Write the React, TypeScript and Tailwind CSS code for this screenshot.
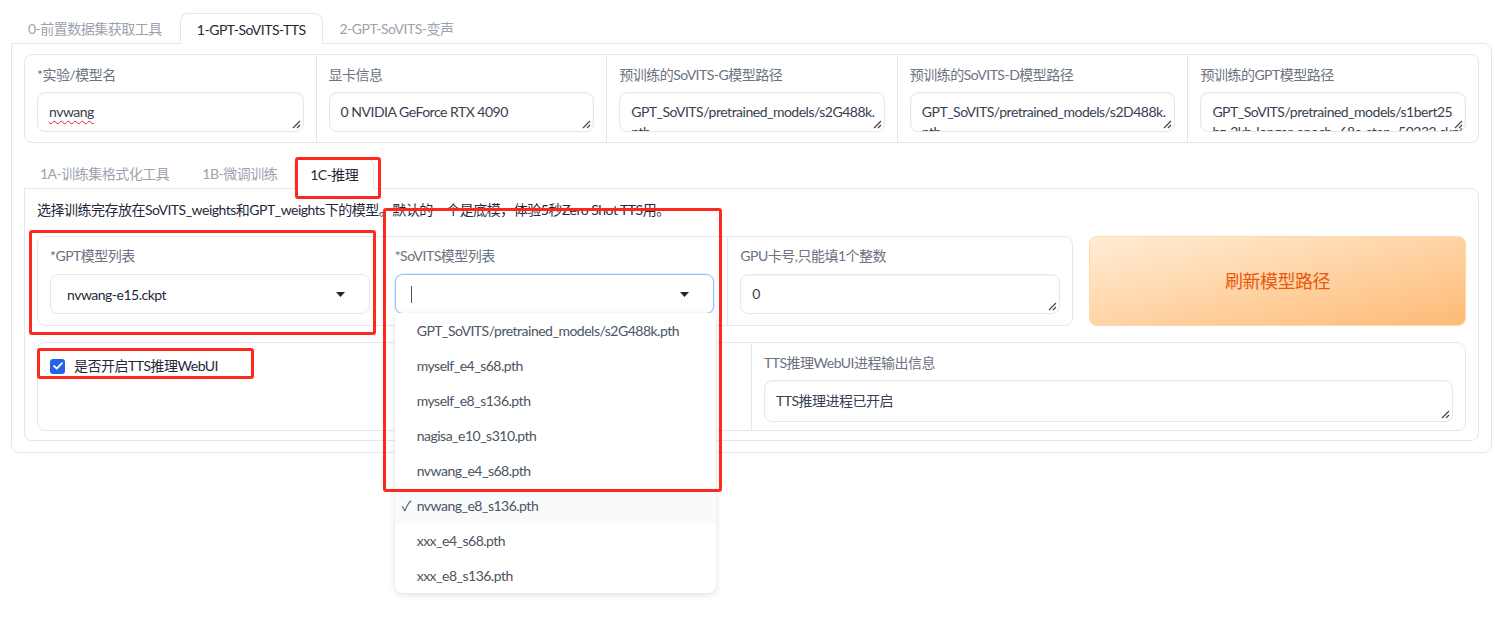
import React from "react";

function Resize() {
  return (
    <svg className="absolute right-[2px] bottom-[2px]" width="9" height="9" viewBox="0 0 9 9">
      <path d="M8 1 L1 8 M8 5 L5 8" stroke="#444" strokeWidth="1.2" fill="none" />
    </svg>
  );
}

function FakeArea({ lines, h = 40, extra = "" }: { lines: React.ReactNode[]; h?: number; extra?: string }) {
  return (
    <div
      className={`relative w-full overflow-hidden rounded-lg border border-[#e5e7eb] bg-white px-[11px] pt-[9px] text-[14px] leading-5 text-[#374151] shadow-[inset_0_1px_2px_rgba(0,0,0,0.05)] ${extra}`}
      style={{ height: h }}
    >
      {lines.map((l, i) => (
        <div key={i} className="whitespace-nowrap">
          {l}
        </div>
      ))}
      <Resize />
    </div>
  );
}

function Label({ children }: { children: React.ReactNode }) {
  return <div className="h-5 text-[14px] leading-5 text-[#6b7280] whitespace-nowrap">{children}</div>;
}

function Caret() {
  return (
    <svg width="9" height="5" viewBox="0 0 9 5">
      <path d="M0 0 L9 0 L4.5 5 Z" fill="#222" />
    </svg>
  );
}

const options = [
  "GPT_SoVITS/pretrained_models/s2G488k.pth",
  "myself_e4_s68.pth",
  "myself_e8_s136.pth",
  "nagisa_e10_s310.pth",
  "nvwang_e4_s68.pth",
  "nvwang_e8_s136.pth",
  "xxx_e4_s68.pth",
  "xxx_e8_s136.pth",
];

export default function App() {
  const topCols = [
    { label: "*实验/模型名", lines: [<span className="underline decoration-wavy decoration-[#e11d48] decoration-1 underline-offset-[3px]">nvwang</span>] },
    { label: "显卡信息", lines: ["0 NVIDIA GeForce RTX 4090"] },
    { label: "预训练的SoVITS-G模型路径", lines: ["GPT_SoVITS/pretrained_models/s2G488k.", "pth"] },
    { label: "预训练的SoVITS-D模型路径", lines: ["GPT_SoVITS/pretrained_models/s2D488k.", "pth"] },
    { label: "预训练的GPT模型路径", lines: ["GPT_SoVITS/pretrained_models/s1bert25", "hz-2kh-longer-epoch=68e-step=50232.ckpt"] },
  ];

  return (
    <div className="relative h-[642px] w-full overflow-hidden bg-white pl-[11px] pr-[15px] pt-[13px] font-['Lato','Noto_Sans_CJK_SC',sans-serif] text-[14px] tracking-[-0.5px] text-[#1f2937]">
      {/* outer tabs */}
      <div className="flex h-[30px] items-end">
        <div className="flex h-[30px] items-center pl-[17px] pr-[18px] text-[#9ca3af]">0-前置数据集获取工具</div>
        <div className="relative z-10 -mb-px flex h-[31px] items-center rounded-t-lg border border-b-0 border-[#e5e7eb] bg-white px-[16px] text-[#1f2937]">
          1-GPT-SoVITS-TTS
        </div>
        <div className="flex h-[30px] items-center px-[17px] text-[#9ca3af]">2-GPT-SoVITS-变声</div>
      </div>

      {/* outer panel */}
      <div className="rounded-b-lg rounded-tr-lg border border-[#e5e7eb] px-[12px] pt-[10px] pb-[11px]">
        {/* top row */}
        <div className="grid grid-cols-5 rounded-lg border border-[#e5e7eb]">
          {topCols.map((c, i) => (
            <div key={i} className={`px-[12px] pt-[10px] pb-[10px] ${i > 0 ? "border-l border-[#e5e7eb]" : ""}`}>
              <Label>{c.label}</Label>
              <div className="mt-[7px]">
                <FakeArea lines={c.lines} />
              </div>
            </div>
          ))}
        </div>

        {/* inner tabs */}
        <div className="mt-[14px] flex h-[31px] items-end">
          <div className="flex h-[30px] items-center px-[16px] text-[#9ca3af]">1A-训练集格式化工具</div>
          <div className="flex h-[30px] items-center px-[17px] text-[#9ca3af]">1B-微调训练</div>
          <div className="relative z-10 -mb-px flex h-[31px] items-center rounded-t-lg border border-b-0 border-[#e5e7eb] bg-white px-[15px] text-[#1f2937]">
            1C-推理
          </div>
        </div>

        {/* inner panel */}
        <div className="flex flex-col gap-4 rounded-b-lg rounded-tr-lg border border-[#e5e7eb] px-[12px] pt-[11px] pb-[9px]">
          <div className="h-5 leading-5 text-[#1f2937]">
            选择训练完存放在SoVITS_weights和GPT_weights下的模型。默认的一个是底模，体验5秒Zero Shot TTS用。
          </div>

          {/* row 2 */}
          <div className="flex h-[90px] gap-4">
            <div className="flex flex-1 rounded-lg border border-[#e5e7eb]">
              <div className="flex-1 px-[12px] pt-[9px]">
                <Label>*GPT模型列表</Label>
                <div className="mt-[8px] flex h-[40px] items-center justify-between rounded-lg border border-[#e5e7eb] bg-white pl-[16px] pr-[24px] text-[#1f2937]">
                  <span>nvwang-e15.ckpt</span>
                  <Caret />
                </div>
              </div>
              <div className="flex-1 px-[13px] pt-[9px]">
                <Label>*SoVITS模型列表</Label>
                <div className="relative mt-[8px]">
                  <div className="flex h-[40px] items-center justify-between rounded-lg border border-[#93c5fd] bg-white pl-[15px] pr-[24px] shadow-[0_0_0_1px_rgba(191,219,254,0.5)]">
                    <span className="h-[17px] w-px bg-[#4b5563]" />
                    <Caret />
                  </div>
                  <div className="absolute left-0 top-[39px] z-20 w-[321px] rounded-b-lg bg-white shadow-[0_2px_6px_rgba(0,0,0,0.12)]">
                    {options.map((o) => {
                      const sel = o === "nvwang_e8_s136.pth";
                      return (
                        <div
                          key={o}
                          className={`relative flex h-[35px] items-center pl-[22px] text-[14px] text-[#4b5563] ${sel ? "bg-[#f9fafb]" : ""}`}
                        >
                          {sel && <span className="absolute left-[7px] text-[#4b5563]">✓</span>}
                          {o}
                        </div>
                      );
                    })}
                  </div>
                </div>
              </div>
              <div className="flex-1 border-l border-[#e5e7eb] px-[12px] pt-[9px]">
                <Label>GPU卡号,只能填1个整数</Label>
                <div className="mt-[8px]">
                  <FakeArea lines={["0"]} />
                </div>
              </div>
            </div>
            <div className="flex w-[377px] items-center justify-center rounded-lg border border-[#fed7aa] bg-gradient-to-br from-[#ffedd5] to-[#fdba74] text-[18px] text-[#ea580c]">
              刷新模型路径
            </div>
          </div>

          {/* row 3 */}
          <div className="flex h-[89px] rounded-lg border border-[#e5e7eb]">
            <div className="flex-1 px-[12px] pt-[13px]">
              <div className="flex items-center gap-[9px]">
                <div className="flex h-[15px] w-[15px] items-center justify-center rounded-[3px] bg-[#2563eb]">
                  <svg width="10" height="8" viewBox="0 0 10 8">
                    <path d="M1 4 L3.8 6.6 L9 1.2" stroke="white" strokeWidth="1.8" fill="none" strokeLinecap="round" strokeLinejoin="round" />
                  </svg>
                </div>
                <span className="leading-5 text-[#1f2937]">是否开启TTS推理WebUI</span>
              </div>
            </div>
            <div className="flex-1 border-l border-[#e5e7eb] px-[12px] pt-[10px]">
              <Label>TTS推理WebUI进程输出信息</Label>
              <div className="mt-[7px]">
                <FakeArea lines={["TTS推理进程已开启"]} h={42} extra="pt-[10px]" />
              </div>
            </div>
          </div>
        </div>
      </div>

      {/* red annotation boxes */}
      <div className="pointer-events-none absolute left-[295px] top-[157px] z-30 h-[42px] w-[86px] rounded-[3px] border-[3px] border-[#fb2a1c]" />
      <div className="pointer-events-none absolute left-[29px] top-[230px] z-30 h-[105px] w-[347px] rounded-[3px] border-[3px] border-[#fb2a1c]" />
      <div className="pointer-events-none absolute left-[37px] top-[348px] z-30 h-[31px] w-[217px] rounded-[3px] border-[3px] border-[#fb2a1c]" />
      <div className="pointer-events-none absolute left-[383px] top-[208px] z-30 h-[284px] w-[339px] rounded-[3px] border-[3px] border-[#fb2a1c]" />
    </div>
  );
}
